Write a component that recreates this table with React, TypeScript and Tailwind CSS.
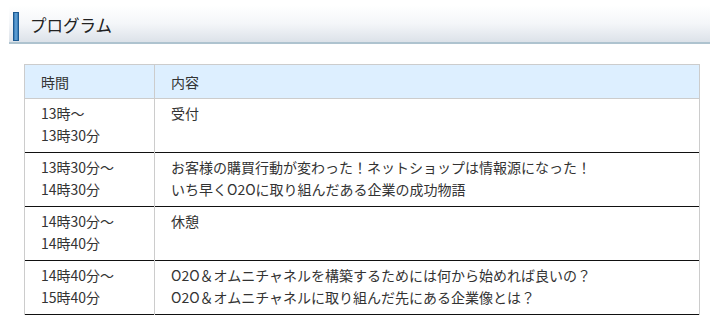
const rows = [
  { time: ["13時～", "13時30分"], body: ["受付"] },
  {
    time: ["13時30分～", "14時30分"],
    body: [
      "お客様の購買行動が変わった！ネットショップは情報源になった！",
      "いち早くO2Oに取り組んだある企業の成功物語",
    ],
  },
  { time: ["14時30分～", "14時40分"], body: ["休憩"] },
  {
    time: ["14時40分～", "15時40分"],
    body: [
      "O2O＆オムニチャネルを構築するためには何から始めれば良いの？",
      "O2O＆オムニチャネルに取り組んだ先にある企業像とは？",
    ],
  },
];

function Lines({ lines }: { lines: string[] }) {
  return (
    <>
      {lines.map((l, i) => (
        <div key={i}>{l}</div>
      ))}
    </>
  );
}

export default function App() {
  return (
    <div
      className="h-[326px] w-[710px] bg-white pt-[5px] text-[#333]"
      style={{ fontFamily: '"Noto Sans CJK JP", "Noto Sans", sans-serif' }}
    >
      <div className="ml-[9px] flex h-[39px] items-center border-b-2 border-[#aec3cf] bg-gradient-to-b from-white via-[#f4f6f9] to-[#dce2e9] pl-1">
        <span className="mt-[5px] h-[29px] w-[6px] border border-[#1d5a92] bg-gradient-to-r from-[#2f77b5] via-[#6aa7d8] to-[#2f77b5]" />
        <h2 className="ml-[11px] mt-[3px] text-[16.5px] leading-none text-[#222]">プログラム</h2>
      </div>

      <table className="ml-[24px] mt-[20px] w-[676px] border-collapse text-[14px] leading-[22px]">
        <thead>
          <tr className="bg-[#ddefff]">
            <th className="h-[34px] w-[130px] border border-[#cccccc] pl-4 text-left font-normal">時間</th>
            <th className="border border-[#cccccc] pl-4 text-left font-normal">内容</th>
          </tr>
        </thead>
        <tbody>
          {rows.map((r, i) => (
            <tr key={i} className="border-b border-b-[#111]">
              <td className="h-[54px] border-x border-[#cccccc] pb-[5px] pl-4 pt-[3px] align-top">
                <Lines lines={r.time} />
              </td>
              <td className="border-x border-[#cccccc] pb-[5px] pl-4 pt-[3px] align-top">
                <Lines lines={r.body} />
              </td>
            </tr>
          ))}
        </tbody>
      </table>
    </div>
  );
}
